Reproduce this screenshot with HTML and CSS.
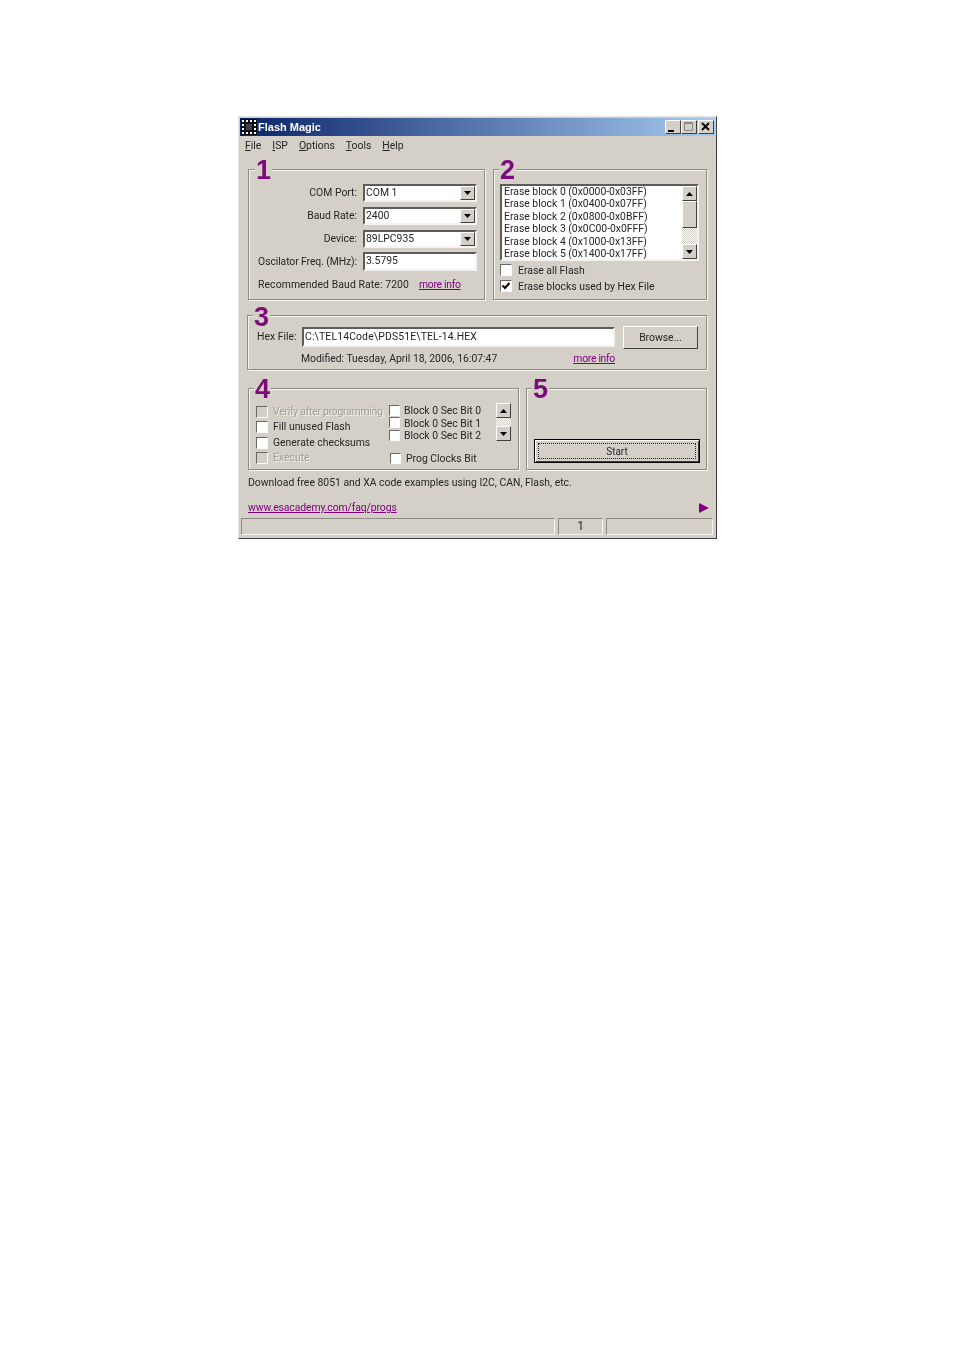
FILE: index.html
```html
<!DOCTYPE html>
<html lang="en">
<head>
<meta charset="utf-8">
<title>Flash Magic</title>
<link rel="stylesheet" href="styles.css">
</head>
<body>
<div class="window">
  <div class="titlebar">
    <svg class="app-icon" width="16" height="16" viewBox="0 0 16 16"><rect width="16" height="16" fill="#0c0c14"/><path d="M1 1h2v2H1zM5 1h2v2H5zM9 1h2v2H9zM13 1h2v2h-2zM1 5h2v2H1zM1 9h2v2H1zM1 13h2v2H1zM5 13h2v2H5zM9 13h2v2H9zM13 13h2v2h-2zM13 5h2v2h-2zM13 9h2v2h-2z" fill="#fff"/><path d="M5 6h6M5 8h6M5 10h6" stroke="#777" stroke-width="1"/></svg>
    <span class="title-text">Flash Magic</span>
    <div class="controls">
      <span class="ctl"><svg width="13" height="12" viewBox="0 0 13 12"><path d="M2 9h6v2H2z" fill="#000"/></svg></span>
      <span class="ctl"><svg width="13" height="12" viewBox="0 0 13 12"><path d="M2.5 1.5h8v8h-8zM2.5 2.5h8" fill="none" stroke="#8a8a8a"/></svg></span>
      <span class="ctl ctl-close"><svg width="13" height="12" viewBox="0 0 13 12"><path d="M3 2l7 7M10 2l-7 7" stroke="#000" stroke-width="1.8" fill="none"/></svg></span>
    </div>
  </div>
  <div class="menu">
    <span><u>F</u>ile</span><span><u>I</u>SP</span><span><u>O</u>ptions</span><span><u>T</u>ools</span><span><u>H</u>elp</span>
  </div>
  <div class="content">
    <div class="row row-top">
      <section class="group g1">
        <span class="num n1">1</span>
        <div class="form">
          <label>COM Port:</label>
          <div class="combo"><span>COM 1</span><span class="drop"><svg class="tri" width="7" height="4" viewBox="0 0 7 4"><path d="M0 0h7L3.5 4z"/></svg></span></div>
          <label>Baud Rate:</label>
          <div class="combo"><span>2400</span><span class="drop"><svg class="tri" width="7" height="4" viewBox="0 0 7 4"><path d="M0 0h7L3.5 4z"/></svg></span></div>
          <label>Device:</label>
          <div class="combo"><span>89LPC935</span><span class="drop"><svg class="tri" width="7" height="4" viewBox="0 0 7 4"><path d="M0 0h7L3.5 4z"/></svg></span></div>
          <label class="osc">Oscilator Freq. (MHz):</label>
          <div class="field osc-field">3.5795</div>
        </div>
        <div class="recommend"><span class="rec-text">Recommended Baud Rate: 7200</span><a class="link more">more info</a></div>
      </section>
      <section class="group g2">
        <span class="num n2">2</span>
        <div class="listbox">
          <div class="items">
            <div>Erase block 0 (0x0000-0x03FF)</div>
            <div>Erase block 1 (0x0400-0x07FF)</div>
            <div>Erase block 2 (0x0800-0x0BFF)</div>
            <div>Erase block 3 (0x0C00-0x0FFF)</div>
            <div>Erase block 4 (0x1000-0x13FF)</div>
            <div>Erase block 5 (0x1400-0x17FF)</div>
          </div>
          <div class="scrollbar">
            <span class="btn"><svg class="tri" width="7" height="4" viewBox="0 0 7 4"><path d="M0 4h7L3.5 0z"/></svg></span>
            <span class="thumb"></span>
            <span class="track"></span>
            <span class="btn"><svg class="tri" width="7" height="4" viewBox="0 0 7 4"><path d="M0 0h7L3.5 4z"/></svg></span>
          </div>
        </div>
        <div class="check erase-a"><span class="box"></span><span class="lower">Erase all Flash</span></div>
        <div class="check erase-b"><span class="box"><svg width="10" height="10" viewBox="0 0 10 10"><path d="M1.5 4.5l2.5 2.5 4.5-5" fill="none" stroke="#000" stroke-width="2"/></svg></span><span class="lower">Erase blocks used by Hex File</span></div>
      </section>
    </div>
    <section class="group g3">
      <span class="num n3">3</span>
      <div class="hex-row">
        <label class="hex-label">Hex File:</label>
        <div class="field hex-field">C:\TEL14Code\PDS51E\TEL-14.HEX</div>
        <span class="button browse">Browse...</span>
      </div>
      <div class="mod-row"><span>Modified: Tuesday, April 18, 2006, 16:07:47</span><a class="link more">more info</a></div>
    </section>
    <div class="row row-low">
      <section class="group g4">
        <span class="num n4">4</span>
        <div class="col-a">
          <div class="check off"><span class="box"></span><span class="tight">Verify after programming</span></div>
          <div class="check"><span class="box"></span><span>Fill unused Flash</span></div>
          <div class="check"><span class="box"></span><span>Generate checksums</span></div>
          <div class="check off"><span class="box"></span><span>Execute</span></div>
        </div>
        <div class="col-b">
          <div class="check"><span class="box"></span><span class="lower">Block 0 Sec Bit 0</span></div>
          <div class="check"><span class="box"></span><span class="lower">Block 0 Sec Bit 1</span></div>
          <div class="check"><span class="box"></span><span class="lower">Block 0 Sec Bit 2</span></div>
          <div class="check prog"><span class="box"></span><span>Prog Clocks Bit</span></div>
        </div>
        <div class="spin">
          <span class="btn"><svg class="tri" width="7" height="4" viewBox="0 0 7 4"><path d="M0 4h7L3.5 0z"/></svg></span>
          <span class="track"></span>
          <span class="btn"><svg class="tri" width="7" height="4" viewBox="0 0 7 4"><path d="M0 0h7L3.5 4z"/></svg></span>
        </div>
      </section>
      <section class="group g5">
        <span class="num n5">5</span>
        <div class="start"><span class="focus">Start</span></div>
      </section>
    </div>
    <p class="note">Download free 8051 and XA code examples using I2C, CAN, Flash, etc.</p>
    <div class="link-row">
      <a class="link site">www.esacademy.com/faq/progs</a>
      <svg width="10" height="10" viewBox="0 0 10 10"><path d="M0 0l10 5L0 10z" fill="#800080"/></svg>
    </div>
  </div>
  <div class="status">
    <span class="panel p1"></span><span class="panel p2">1</span><span class="panel p3"></span>
  </div>
</div>
</body>
</html>
```
FILE: styles.css
```css
* { box-sizing: border-box; }
html, body { margin: 0; background: #fff; }
body {
  padding: 116px 0 0 238px;
  height: 1350px;
  overflow: hidden;
  font-family: Roboto, "Liberation Sans", Arial, sans-serif;
  font-size: 10.4px;
  line-height: 14px;
  color: #262626;
  white-space: nowrap;
}
.window {
  width: 479px;
  height: 423px;
  padding: 1px;
  background: #d4d0c8;
  border: 1px solid;
  border-color: #e6e4de #3c3c3c #3c3c3c #e6e4de;
  filter: blur(0.3px);
}
.titlebar {
  display: flex;
  align-items: center;
  height: 18px;
  padding: 0 1px;
  background: linear-gradient(90deg, #0a246a, #a6caf0);
}
.app-icon { flex: none; }
.title-text {
  margin-left: 1px;
  font-family: "Liberation Sans", Arial, sans-serif;
  font-weight: bold;
  font-size: 11px;
  color: #fff;
}
.controls { display: flex; margin-left: auto; }
.ctl {
  display: flex;
  width: 16px;
  height: 14px;
  background: #d4d0c8;
  border: 1px solid;
  border-color: #fff #404040 #404040 #fff;
}
.ctl-close { margin-left: 1px; }
.menu {
  display: flex;
  gap: 11px;
  height: 19px;
  padding: 3px 0 0 5px;
}
.content { padding-left: 8px; }
.row { display: flex; }
.row-top { margin-top: 14px; gap: 8px; }
.row-low { margin-top: 18px; gap: 7px; }
.group {
  position: relative;
  border: 1px solid #8e8b84;
  box-shadow: 1px 1px 0 #f4f3f0, inset 1px 1px 0 #f4f3f0;
}
.num {
  position: absolute;
  top: -14px;
  padding: 0 1px;
  background: #d4d0c8;
  font-family: "Liberation Sans", Arial, sans-serif;
  font-size: 27px;
  font-weight: bold;
  line-height: 28px;
  color: #7b0a7b;
}
.n1 { left: 6px; }
.n2 { left: 5px; }
.n3 { left: 5px; top: -13px; }
.n4 { left: 5px; }
.n5 { left: 5px; }
.g1 { width: 237px; height: 131px; padding: 14px 0 0 9px; }
.form {
  display: grid;
  grid-template-columns: 99px 114px;
  column-gap: 6px;
  grid-auto-rows: 18px;
  row-gap: 5px;
  align-items: center;
}
.form label { text-align: right; }
.form .osc { letter-spacing: -0.1px; }
.combo, .field {
  background: #fff;
  border: 2px solid;
  border-color: #5e5c58 #f4f3f0 #f4f3f0 #5e5c58;
}
.combo {
  display: flex;
  align-items: center;
  justify-content: space-between;
  height: 18px;
  padding-left: 1px;
}
.drop, .btn {
  display: flex;
  align-items: center;
  justify-content: center;
  width: 15px;
  height: 15px;
  background: #d4d0c8;
  border: 1px solid;
  border-color: #fff #404040 #404040 #fff;
}
.drop { height: 14px; }
.tri { fill: #000; }
.field { display: flex; align-items: center; padding-left: 1px; }
.osc-field { height: 19px; margin-top: -2px; }
.recommend { display: flex; gap: 10px; margin-top: 7px; }
.rec-text { letter-spacing: 0.1px; }
.link { color: #800080; text-decoration: underline; }
.more { letter-spacing: -0.3px; }
.site { letter-spacing: -0.1px; }
.g2 { width: 214px; height: 131px; padding: 14px 0 0 6px; }
.listbox {
  display: flex;
  justify-content: space-between;
  width: 199px;
  height: 77px;
  background: #fff;
  border: 2px solid;
  border-color: #5e5c58 #f4f3f0 #f4f3f0 #5e5c58;
  overflow: hidden;
}
.items { padding: 0 0 0 2px; line-height: 12.4px; }
.scrollbar { display: flex; flex-direction: column; width: 15px; }
.thumb {
  display: block;
  height: 27px;
  background: #d4d0c8;
  border: 1px solid;
  border-color: #fff #404040 #404040 #fff;
}
.track {
  display: block;
  flex: 1;
  background: repeating-conic-gradient(#fff 0 25%, #d4d0c8 0 50%) 0 0 / 2px 2px;
}
.check { display: flex; align-items: center; gap: 6px; }
.box {
  display: flex;
  align-items: center;
  justify-content: center;
  flex: none;
  width: 12px;
  height: 12px;
  background: #fff;
  border: 1px solid;
  border-color: #6a6864 #fafafa #fafafa #6a6864;
}
.lower { padding-top: 2px; }
.tight { letter-spacing: -0.25px; }
.erase-a, .erase-b { height: 14px; margin-top: 2px; }
.g3 {
  width: 460px;
  height: 55px;
  margin: 15px 0 0 -1px;
  padding: 11px 0 0 9px;
}
.hex-row { display: flex; align-items: flex-start; }
.hex-label { width: 45px; line-height: 19px; }
.hex-field { width: 313px; height: 20px; letter-spacing: 0.15px; }
.button {
  display: flex;
  align-items: center;
  justify-content: center;
  background: #d4d0c8;
  border: 1px solid;
  border-color: #fff #404040 #404040 #fff;
}
.browse { width: 75px; height: 23px; margin: -1px 0 0 8px; }
.mod-row {
  display: flex;
  justify-content: space-between;
  width: 314px;
  margin: 3px 0 0 44px;
}
.g4 {
  display: flex;
  width: 271px;
  height: 82px;
  padding: 15px 0 0 7px;
}
.col-a { width: 133px; }
.col-a .check { height: 15.5px; gap: 5px; }
.col-b { width: 107px; }
.col-b .check { height: 12.5px; gap: 4px; }
.col-b .box { width: 11px; height: 11px; }
.col-b .prog { margin: 11px 0 0 1px; gap: 5px; }
.off { color: #a09d96; text-shadow: 1px 1px 0 #f4f3f0; }
.off .box { background: #d4d0c8; }
.spin { display: flex; flex-direction: column; height: 38px; margin-top: -1px; }
.g5 {
  display: flex;
  align-items: flex-end;
  width: 181px;
  height: 82px;
  padding: 0 6px 6px 7px;
}
.start {
  width: 167px;
  height: 24px;
  padding: 3px;
  background: #d4d0c8;
  border: 1px solid #000;
  box-shadow: inset 1px 1px 0 #fff, inset -1px -1px 0 #404040;
}
.focus {
  display: flex;
  align-items: center;
  justify-content: center;
  height: 100%;
  padding-top: 1px;
  font-size: 10px;
  border: 1px dotted #222;
}
.note { margin: 6px 0 0; }
.link-row {
  display: flex;
  align-items: center;
  justify-content: space-between;
  width: 461px;
  margin-top: 11px;
}
.status { display: flex; gap: 3px; margin: 3px 0 0 1px; }
.panel {
  display: block;
  height: 17px;
  text-align: center;
  font-size: 12px;
  border: 1px solid;
  border-color: #8e8b84 #f4f3f0 #f4f3f0 #8e8b84;
}
.p1 { width: 314px; }
.p2 { width: 45px; }
.p3 { width: 107px; }
```
